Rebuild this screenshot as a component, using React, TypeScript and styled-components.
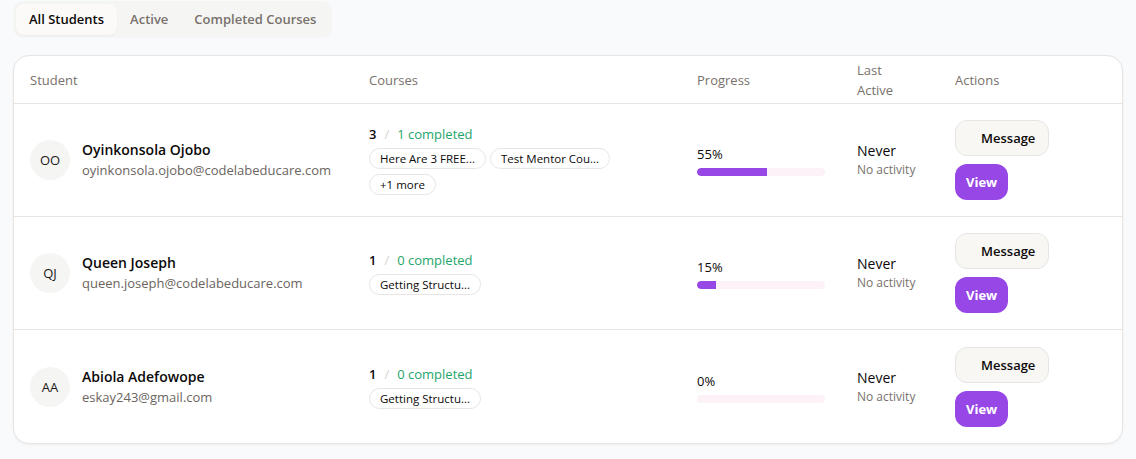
import React from "react";
import styled, { createGlobalStyle } from "styled-components";

const GlobalStyle = createGlobalStyle`
  * { box-sizing: border-box; }
  html, body { margin: 0; padding: 0; background: #f9fafb; }
  body { font-family: "Open Sans", "Noto Sans", Arial, sans-serif; color: #0c0a09; }
`;

const Page = styled.div`
  padding: 1px 13px 16px 13px;
`;

const TabBar = styled.div`
  display: inline-flex;
  align-items: center;
  padding: 3px;
  background: #f5f5f4;
  border-radius: 10px;
  margin-bottom: 17px;
`;

const Tab = styled.button<{ $active?: boolean }>`
  border: none;
  font-family: inherit;
  font-size: 13px;
  font-weight: 600;
  line-height: 19px;
  padding: 6px 13px;
  height: 31px;
  border-radius: 8px;
  cursor: pointer;
  color: ${(p) => (p.$active ? "#0c0a09" : "#78716c")};
  background: ${(p) => (p.$active ? "#fbfaf9" : "transparent")};
  box-shadow: ${(p) => (p.$active ? "0 1px 2px rgba(0,0,0,0.04)" : "none")};
`;

const Card = styled.div`
  background: #ffffff;
  border: 1px solid #e7e5e4;
  border-radius: 16px;
  box-shadow: 0 1px 3px rgba(0, 0, 0, 0.05);
  overflow: hidden;
`;

const Grid = styled.div`
  display: grid;
  grid-template-columns: 339px 328px 160px 98px 1fr;
`;

const HeadCell = styled.div`
  display: flex;
  align-items: center;
  height: 48px;
  padding: 4px 16px;
  font-size: 13px;
  font-weight: 500;
  line-height: 20px;
  color: #78716c;
  border-bottom: 1px solid #e7e5e4;
`;

const HeadLabel = styled.span<{ $narrow?: boolean }>`
  max-width: ${(p) => (p.$narrow ? "50px" : "none")};
`;

const Cell = styled.div<{ $last?: boolean }>`
  display: flex;
  align-items: center;
  padding: 16px;
  border-bottom: ${(p) => (p.$last ? "none" : "1px solid #e7e5e4")};
  min-height: 113px;
`;

const StudentBox = styled.div`
  display: flex;
  align-items: center;
  gap: 12px;
`;

const Avatar = styled.div`
  width: 40px;
  height: 40px;
  border-radius: 50%;
  background: #f5f5f4;
  display: flex;
  align-items: center;
  justify-content: center;
  font-size: 13px;
  color: #1c1917;
`;

const NameCol = styled.div`
  display: flex;
  flex-direction: column;
`;

const Name = styled.div`
  font-size: 14px;
  font-weight: 600;
  line-height: 20px;
  color: #0c0a09;
`;

const Email = styled.div`
  font-size: 13px;
  line-height: 20px;
  color: #6b6560;
`;

const CoursesBox = styled.div`
  display: flex;
  flex-direction: column;
  gap: 4px;
`;

const CountLine = styled.div`
  font-size: 13px;
  line-height: 19px;
  display: flex;
  gap: 8px;
`;

const Count = styled.span`
  font-weight: 600;
  color: #0c0a09;
`;

const Slash = styled.span`
  color: #d6d3d1;
`;

const Completed = styled.span`
  color: #1ea56a;
`;

const Chips = styled.div`
  display: flex;
  flex-wrap: wrap;
  gap: 5px 4px;
  max-width: 250px;
`;

const Chip = styled.span`
  display: inline-flex;
  align-items: center;
  height: 21px;
  padding: 0 10px;
  border: 1px solid #e7e5e4;
  border-radius: 11px;
  font-size: 11.5px;
  font-weight: 500;
  color: #0c0a09;
  white-space: nowrap;
`;

const ProgressBox = styled.div`
  display: flex;
  flex-direction: column;
  gap: 4px;
  width: 128px;
`;

const Percent = styled.div`
  font-size: 13px;
  line-height: 20px;
  color: #0c0a09;
`;

const Track = styled.div`
  height: 8px;
  border-radius: 4px;
  background: #fdf2f8;
  overflow: hidden;
`;

const Fill = styled.div`
  height: 100%;
  background: #9747e6;
  border-radius: 4px 0 0 4px;
`;

const ActiveBox = styled.div`
  display: flex;
  flex-direction: column;
`;

const Never = styled.div`
  font-size: 14px;
  line-height: 20px;
  color: #0c0a09;
`;

const NoActivity = styled.div`
  font-size: 12px;
  line-height: 18px;
  color: #78716c;
`;

const Actions = styled.div`
  display: flex;
  flex-direction: column;
  align-items: flex-start;
  gap: 8px;
`;

const MessageBtn = styled.button`
  height: 36px;
  padding: 0 13px 0 25px;
  border: 1px solid #e7e5e4;
  border-radius: 12px;
  background: #f8f7f4;
  font-family: inherit;
  font-size: 13px;
  font-weight: 600;
  color: #0c0a09;
  cursor: pointer;
`;

const ViewBtn = styled.button`
  height: 36px;
  padding: 0 11px;
  border: none;
  border-radius: 12px;
  background: #9747e6;
  font-family: inherit;
  font-size: 13px;
  font-weight: 700;
  color: #ffffff;
  cursor: pointer;
`;

type Student = {
  initials: string;
  name: string;
  email: string;
  total: number;
  completed: number;
  courses: string[];
  progress: number;
};

const students: Student[] = [
  {
    initials: "OO",
    name: "Oyinkonsola Ojobo",
    email: "oyinkonsola.ojobo@codelabeducare.com",
    total: 3,
    completed: 1,
    courses: ["Here Are 3 FREE...", "Test Mentor Cou...", "+1 more"],
    progress: 55,
  },
  {
    initials: "QJ",
    name: "Queen Joseph",
    email: "queen.joseph@codelabeducare.com",
    total: 1,
    completed: 0,
    courses: ["Getting Structu..."],
    progress: 15,
  },
  {
    initials: "AA",
    name: "Abiola Adefowope",
    email: "eskay243@gmail.com",
    total: 1,
    completed: 0,
    courses: ["Getting Structu..."],
    progress: 0,
  },
];

export default function App() {
  return (
    <>
      <GlobalStyle />
      <Page>
        <TabBar>
          <Tab $active>All Students</Tab>
          <Tab>Active</Tab>
          <Tab>Completed Courses</Tab>
        </TabBar>
        <Card>
          <Grid>
            <HeadCell>Student</HeadCell>
            <HeadCell>Courses</HeadCell>
            <HeadCell>Progress</HeadCell>
            <HeadCell>
              <HeadLabel $narrow>Last Active</HeadLabel>
            </HeadCell>
            <HeadCell>Actions</HeadCell>
            {students.map((s, i) => {
              const last = i === students.length - 1;
              return (
                <React.Fragment key={s.email}>
                  <Cell $last={last}>
                    <StudentBox>
                      <Avatar>{s.initials}</Avatar>
                      <NameCol>
                        <Name>{s.name}</Name>
                        <Email>{s.email}</Email>
                      </NameCol>
                    </StudentBox>
                  </Cell>
                  <Cell $last={last}>
                    <CoursesBox>
                      <CountLine>
                        <Count>{s.total}</Count>
                        <Slash>/</Slash>
                        <Completed>{s.completed} completed</Completed>
                      </CountLine>
                      <Chips>
                        {s.courses.map((c) => (
                          <Chip key={c}>{c}</Chip>
                        ))}
                      </Chips>
                    </CoursesBox>
                  </Cell>
                  <Cell $last={last}>
                    <ProgressBox>
                      <Percent>{s.progress}%</Percent>
                      <Track>
                        <Fill style={{ width: `${s.progress}%` }} />
                      </Track>
                    </ProgressBox>
                  </Cell>
                  <Cell $last={last}>
                    <ActiveBox>
                      <Never>Never</Never>
                      <NoActivity>No activity</NoActivity>
                    </ActiveBox>
                  </Cell>
                  <Cell $last={last}>
                    <Actions>
                      <MessageBtn>Message</MessageBtn>
                      <ViewBtn>View</ViewBtn>
                    </Actions>
                  </Cell>
                </React.Fragment>
              );
            })}
          </Grid>
        </Card>
      </Page>
    </>
  );
}
